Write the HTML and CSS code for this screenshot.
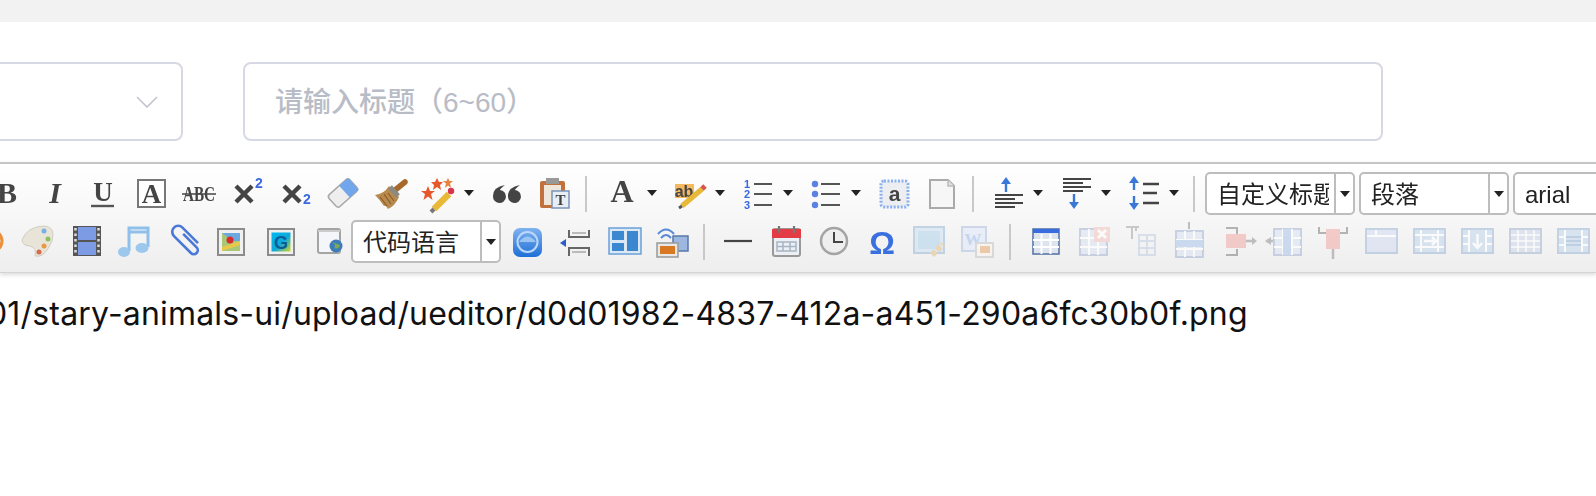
FILE: index.html
```html
<!DOCTYPE html>
<html lang="zh">
<head>
<meta charset="utf-8">
<title>编辑器</title>
<link rel="stylesheet" href="styles.css">
</head>
<body>
<svg class="defs" width="0" height="0" aria-hidden="true">
  <defs>
    <symbol id="grid" viewBox="0 0 48 48">
      <rect x="11" y="12" width="27" height="26" fill="#dde4f2" stroke="#a8bad6" stroke-width="2"/>
      <path d="M11 21H38M11 30H38M20 12V38M29 12V38" stroke="#fff" stroke-width="2"/>
    </symbol>
    <linearGradient id="blueapp" x1="0" y1="0" x2="0" y2="1"><stop offset="0" stop-color="#7fb2f0"/><stop offset="1" stop-color="#1f6fd8"/></linearGradient>
    <linearGradient id="gimg" x1="0" y1="0" x2="1" y2="1"><stop offset="0" stop-color="#00b8f0"/><stop offset=".55" stop-color="#10a8d8"/><stop offset="1" stop-color="#d8d820"/></linearGradient>
  </defs>
</svg>
<div class="topbar"></div>
<div class="form">
  <div class="select"><svg class="chev" viewBox="0 0 22 12"><path d="M1 1L11 11L21 1" fill="none" stroke="#c0c4cc" stroke-width="1.6"/></svg></div>
  <div class="input">请输入标题（6~60）</div>
</div>
<div class="editor">
  <div class="toolbar">
    <div class="row row1">
      <svg class="b" viewBox="0 0 48 48"><text x="24" y="34" class="t-sb" font-size="30" text-anchor="middle">B</text></svg>
      <svg class="b" viewBox="0 0 48 48"><text x="24" y="34" class="t-si" font-size="30" text-anchor="middle">I</text></svg>
      <svg class="b" viewBox="0 0 48 48"><text x="24" y="32" class="t-sb" font-size="27" text-anchor="middle">U</text><path d="M12 37H35" stroke="#555" stroke-width="2.4"/></svg>
      <svg class="b" viewBox="0 0 48 48"><rect x="11" y="11" width="27" height="27" fill="#fff" stroke="#777" stroke-width="2"/><text x="24.5" y="34" class="t-sb" font-size="27" text-anchor="middle">A</text></svg>
      <svg class="b" viewBox="0 0 48 48"><text x="8" y="32" class="t-sb" font-size="20" textLength="32" lengthAdjust="spacingAndGlyphs">ABC</text><path d="M7 25H41" stroke="#444" stroke-width="1.6"/></svg>
      <svg class="b" viewBox="0 0 48 48"><path d="M13 17L29 33M29 17L13 33" stroke="#444" stroke-width="4.4"/><text x="36" y="19" class="t-blue" font-size="14" text-anchor="middle">2</text></svg>
      <svg class="b" viewBox="0 0 48 48"><path d="M13 17L29 33M29 17L13 33" stroke="#444" stroke-width="4.4"/><text x="36" y="35" class="t-blue" font-size="14" text-anchor="middle">2</text></svg>
      <svg class="b" viewBox="0 0 48 48"><g transform="rotate(-42 24 24)"><rect x="10" y="16" width="28" height="16" rx="3" fill="#eee" stroke="#a8a8a8" stroke-width="1.500"/><path d="M26 16H35a3 3 0 0 1 3 3V32H26z" fill="#72a6ec"/></g></svg>
      <svg class="b" viewBox="0 0 48 48"><path d="M27 22L38 13" stroke="#a8682c" stroke-width="5.500" stroke-linecap="round"/><path d="M8 26Q17 25 22 17L32 28Q28 37 21 40Q19 36 17 37Q13 31 8 26z" fill="#b98a4e"/><path d="M23 18L31 27" stroke="#8a8a80" stroke-width="5"/><path d="M13 28L20 37M17 25L24 35M21 24L27 32" stroke="#8a5c28" stroke-width="1.200"/></svg>
      <svg class="b" viewBox="0 0 48 48"><path d="M0-7L2-2 7-2 3 1 4.500 7 0 3.500-4.500 7-3 1-7-2-2-2z" fill="#e8562c" transform="translate(13 24)"/><path d="M0-6L2-2 6-2 3 1 4 6 0 3-4 6-3 1-6-2-2-2z" fill="#e8562c" transform="translate(22 15)"/><path d="M0-5L1.500-2 5-2 2 .500 3 5 0 2.500-3 5-2 .500-5-2-1.500-2z" fill="#e8823c" transform="translate(33 14)"/><path d="M19 40L34 25" stroke="#e8b838" stroke-width="6.500"/><path d="M19 40L16 43" stroke="#777" stroke-width="4"/><circle cx="36" cy="22" r="3.200" fill="#d8344c"/></svg>
      <span class="arr"></span>
      <svg class="b" viewBox="0 0 48 48"><path d="M10 27Q10 18 22 16Q17 20 17 21A6.500 6.500 0 1 1 10 27z" fill="#444"/><path d="M25 27Q25 18 37 16Q32 20 32 21A6.500 6.500 0 1 1 25 27z" fill="#444"/></svg>
      <svg class="b" viewBox="0 0 48 48"><rect x="9" y="12" width="25" height="27" rx="2" fill="#c2703c"/><rect x="15" y="9" width="13" height="6" fill="#999"/><rect x="13" y="16" width="17" height="20" fill="#efe6dc"/><rect x="21" y="22" width="17" height="17" fill="#e8eef6" stroke="#7a94b8" stroke-width="1.500"/><text x="29.500" y="36" class="t-sb" font-size="15" text-anchor="middle">T</text></svg>
      <span class="sep"></span>
      <svg class="b" viewBox="0 0 48 48"><text x="24" y="33" class="t-sb" font-size="32" text-anchor="middle">A</text></svg>
      <span class="arr"></span>
      <svg class="b" viewBox="0 0 48 48"><rect x="9" y="15" width="19" height="14" fill="#f4b860"/><text x="18" y="28" class="t-ss" font-size="16" text-anchor="middle">ab</text><path d="M16 37L36 20" stroke="#e8b838" stroke-width="5.500"/><path d="M36 20L39 17" stroke="#d8544c" stroke-width="5"/><path d="M16 37L13 39" stroke="#555" stroke-width="3"/></svg>
      <span class="arr"></span>
      <svg class="b" viewBox="0 0 48 48"><text x="13" y="19" class="t-blue" font-size="11" text-anchor="middle">1</text><text x="13" y="29" class="t-blue" font-size="11" text-anchor="middle">2</text><text x="13" y="40" class="t-blue" font-size="11" text-anchor="middle">3</text><path d="M20 15H38M20 25H38M20 36H38" stroke="#555" stroke-width="2"/></svg>
      <span class="arr"></span>
      <svg class="b" viewBox="0 0 48 48"><circle cx="13" cy="15" r="3.200" fill="#5a82e0"/><circle cx="13" cy="25" r="3.200" fill="#5a82e0"/><circle cx="13" cy="36" r="3.200" fill="#5a82e0"/><path d="M19 15H38M19 25H38M19 36H38" stroke="#555" stroke-width="2"/></svg>
      <span class="arr"></span>
      <svg class="b" viewBox="0 0 48 48"><rect x="11" y="12" width="27" height="26" rx="3" fill="#eceef2" stroke="#8ab0f0" stroke-width="3" stroke-dasharray="2 1.500"/><text x="24.500" y="32" class="t-ss" font-size="21" text-anchor="middle">a</text></svg>
      <svg class="b" viewBox="0 0 48 48"><path d="M12 11H30L36 17V39H12z" fill="#f6f6f6" stroke="#aaa" stroke-width="2"/><path d="M30 11V17H36" fill="#e0e0e0" stroke="#bbb" stroke-width="1.500"/></svg>
      <span class="sep tight"></span>
      <svg class="b" viewBox="0 0 48 48"><path d="M22 13V23" stroke="#3a78d8" stroke-width="2.400"/><path d="M22 8L27 15H17z" fill="#3a78d8"/><path d="M11 26H39M11 30H31M11 34H39M11 38H31" stroke="#444" stroke-width="2.200"/></svg>
      <span class="arr"></span>
      <svg class="b" viewBox="0 0 48 48"><path d="M11 10H39M11 14H31M11 18H39M11 22H31" stroke="#444" stroke-width="2.200"/><path d="M22 25V34" stroke="#3a78d8" stroke-width="2.400"/><path d="M22 40L27 33H17z" fill="#3a78d8"/></svg>
      <span class="arr"></span>
      <svg class="b" viewBox="0 0 48 48"><path d="M14 12V21M14 27V36" stroke="#3a78d8" stroke-width="2.400"/><path d="M14 7L19 14H9zM14 41L19 34H9z" fill="#3a78d8"/><path d="M23 15H39M23 24H37M23 34H39" stroke="#444" stroke-width="2.400"/></svg>
      <span class="arr"></span>
      <span class="sep narrow"></span>
      <div class="combo"><span class="combo-text">自定义标题</span><span class="combo-arr"></span></div>
      <div class="combo"><span class="combo-text">段落</span><span class="combo-arr"></span></div>
      <div class="combo"><span class="combo-text">arial</span><span class="combo-arr"></span></div>
    </div>
    <div class="row row2">
      <svg class="b" viewBox="0 0 48 48"><circle cx="24" cy="24" r="11" fill="#eee" stroke="#e8903c" stroke-width="3"/></svg>
      <svg class="b" viewBox="0 0 48 48"><path d="M7 23Q12 10 28 9Q38 9 38 18Q38 24 34 30Q28 41 20 39Q22 31 15 29Q8 29 7 23z" fill="#e8e4d8" stroke="#d0ccc0"/><circle cx="29" cy="14" r="2.500" fill="#7ab0e8"/><circle cx="33" cy="22" r="2.500" fill="#8cc060"/><circle cx="29" cy="29" r="2.500" fill="#e89848"/><circle cx="24" cy="35" r="2.500" fill="#d86850"/></svg>
      <svg class="b" viewBox="0 0 48 48"><rect x="10" y="9" width="28" height="30" fill="#555"/><rect x="15" y="10" width="18" height="13" fill="#7d9ae4"/><rect x="15" y="25" width="18" height="13" fill="#7d9ae4"/><path d="M12.500 11V38M35.500 11V38" stroke="#ddd" stroke-width="2.500" stroke-dasharray="2.500 3"/></svg>
      <svg class="b" viewBox="0 0 48 48"><path d="M18 34V11H37V30" fill="none" stroke="#8fc0ea" stroke-width="3"/><path d="M18 15H37" stroke="#8fc0ea" stroke-width="3"/><ellipse cx="13" cy="35" rx="6" ry="5" fill="#9cc8ee"/><ellipse cx="31" cy="31" rx="6.500" ry="5" fill="#9cc8ee"/></svg>
      <svg class="b" viewBox="0 0 48 48"><path d="M30 17V36a4 4 0 0 1-8 0V12a6 6 0 0 1 12 0V34" fill="none" stroke="#4a78d8" stroke-width="2.600" transform="rotate(-45 27 24)"/></svg>
      <svg class="b" viewBox="0 0 48 48"><rect x="11" y="12" width="26" height="26" fill="#f0f0f0" stroke="#8c8c8c" stroke-width="2"/><rect x="15" y="16" width="18" height="18" fill="#a8c878"/><path d="M15 16H33V24H26z" fill="#6aa8e0"/><path d="M15 30L33 24V28L15 34z" fill="#e8c848"/><circle cx="23" cy="23" r="3.500" fill="#d82c2c"/></svg>
      <svg class="b" viewBox="0 0 48 48"><rect x="13" y="12" width="26" height="26" fill="#f0f0f0" stroke="#8c8c8c" stroke-width="2"/><rect x="16.500" y="15.500" width="19" height="19" fill="url(#gimg)"/><text x="26" y="32" class="t-g" font-size="18" text-anchor="middle">G</text></svg>
      <svg class="b" viewBox="0 0 48 48"><rect x="15" y="12" width="22" height="24" rx="2" fill="#f4f6fa" stroke="#a4a4a4" stroke-width="2"/><path d="M15 14H37" stroke="#ccc" stroke-width="2"/><circle cx="33" cy="29" r="6.500" fill="#3c7cb8"/><path d="M29 25Q34 28 31 31Q36 33 37 28" fill="#7ca858"/></svg>
      <div class="combo code"><span class="combo-text">代码语言</span><span class="combo-arr"></span></div>
      <svg class="b" viewBox="0 0 48 48"><rect x="10" y="11" width="29" height="29" rx="7" fill="url(#blueapp)"/><circle cx="24.500" cy="25" r="10" fill="none" stroke="#bcd8f8" stroke-width="2"/><path d="M16 25Q24.500 14 33 25" fill="#9cc4f0"/></svg>
      <svg class="b" viewBox="0 0 48 48"><path d="M18 13V20H38V13M18 39V31H38V39" fill="none" stroke="#666" stroke-width="2"/><path d="M21 16H35M21 35H35" stroke="#bbb" stroke-width="2"/><path d="M9 26L15 22V30z" fill="#2c5cc8"/></svg>
      <svg class="b" viewBox="0 0 48 48"><rect x="10" y="11" width="32" height="26" fill="#dce8f4" stroke="#6aa0d8" stroke-width="1.500"/><rect x="13" y="14" width="12" height="9" fill="#3c88d0"/><rect x="13" y="26" width="12" height="8" fill="#3c88d0"/><rect x="28" y="14" width="11" height="20" fill="#3c88d0"/></svg>
      <svg class="b" viewBox="0 0 48 48"><path d="M11 17Q19 8 27 17M14 21Q19 15 24 21" fill="none" stroke="#5a88d8" stroke-width="2"/><rect x="26" y="19" width="15" height="15" fill="#9cb8e0" stroke="#5a78a8" stroke-width="1.500"/><rect x="10" y="26" width="21" height="14" fill="#e8e8e8" stroke="#999" stroke-width="1.500"/><rect x="13" y="29" width="15" height="8" fill="#d87820"/></svg>
      <span class="sep shift"></span>
      <svg class="b" viewBox="0 0 48 48"><path d="M10 24H38" stroke="#444" stroke-width="2.200"/></svg>
      <svg class="b" viewBox="0 0 48 48"><rect x="11" y="12" width="27" height="27" rx="2" fill="#ecf0f4" stroke="#999" stroke-width="2"/><rect x="10" y="12" width="29" height="9" fill="#e43c44"/><path d="M17 9V16M32 9V16" stroke="#777" stroke-width="2.200"/><path d="M15 25H34V34H15zM21 25V34M28 25V34M15 29.500H34" fill="none" stroke="#a8b4c4" stroke-width="1.500"/></svg>
      <svg class="b" viewBox="0 0 48 48"><circle cx="24" cy="24" r="13" fill="#eee" stroke="#a4a4a4" stroke-width="2.500"/><path d="M24 15V25H33" fill="none" stroke="#444" stroke-width="2"/></svg>
      <svg class="b" viewBox="0 0 48 48"><text x="24" y="37" class="t-omega" font-size="32" text-anchor="middle">Ω</text></svg>
      <svg class="b dim" viewBox="0 0 48 48"><rect x="8" y="10" width="30" height="26" fill="#cfe2f4" stroke="#a0bcd8" stroke-width="2"/><rect x="12" y="14" width="22" height="18" fill="#b4d4ec"/><path d="M26 38L37 27" stroke="#e4c48c" stroke-width="6" stroke-dasharray="5 2"/></svg>
      <svg class="b dim" viewBox="0 0 48 48"><rect x="8" y="10" width="24" height="24" fill="#dfe8f8" stroke="#b4c4e0" stroke-width="2"/><text x="19" y="28" class="t-w" font-size="17" text-anchor="middle">W</text><rect x="22" y="26" width="17" height="14" fill="#fbf6ee" stroke="#c8c8c8" stroke-width="2"/><rect x="26" y="29" width="10" height="7" fill="#e8b078"/></svg>
      <span class="sep shift-less"></span>
      <svg class="b" viewBox="0 0 48 48"><rect x="12" y="12" width="26" height="25" fill="#dde4ee" stroke="#5a78a8" stroke-width="1.600"/><path d="M12 14H38" stroke="#3a6ce0" stroke-width="4"/><path d="M12 23H38M12 30H38M20.500 17V37M29.500 17V37" stroke="#fff" stroke-width="2"/></svg>
      <svg class="b dim" viewBox="0 0 48 48"><use href="#grid"/><rect x="25" y="10" width="16" height="15" fill="#f4c8c4"/><path d="M29 13L37 21M37 13L29 21" stroke="#fff" stroke-width="3"/></svg>
      <svg class="b dim" viewBox="0 0 48 48"><path d="M9 10H22M15 10V22M19 10V14" fill="none" stroke="#aaa" stroke-width="2"/><path d="M22 18H38V38H22zM22 24H38M22 31H38M30 18V38" fill="none" stroke="#c4d0e4" stroke-width="2"/></svg>
      <svg class="b dim" viewBox="0 0 48 48"><path d="M24 5V12" stroke="#999" stroke-width="2"/><use href="#grid" y="2"/><rect x="11" y="23" width="27" height="7" fill="#b0c8ec"/></svg>
      <svg class="b dim" viewBox="0 0 48 48"><path d="M13 11H24V17M13 38H24V32" fill="none" stroke="#888" stroke-width="2"/><rect x="13" y="17" width="20" height="14" fill="#f0b0ac"/><path d="M33 24H42" stroke="#999" stroke-width="2.500"/><path d="M44 24L39 20V28z" fill="#999"/></svg>
      <svg class="b dim" viewBox="0 0 48 48"><path d="M5 24H14" stroke="#999" stroke-width="2.500"/><path d="M4 24L10 20V28z" fill="#999"/><use href="#grid" x="2"/><rect x="22" y="12" width="8" height="26" fill="#b0c8ec"/></svg>
      <svg class="b dim" viewBox="0 0 48 48"><path d="M10 10V16H17M38 10V16H31" fill="none" stroke="#888" stroke-width="2"/><rect x="17" y="12" width="14" height="20" fill="#f0b0ac"/><path d="M24 32V42" stroke="#999" stroke-width="2.500"/></svg>
      <svg class="b dim" viewBox="0 0 48 48"><rect x="9" y="12" width="31" height="24" fill="#d4dcf0" stroke="#a4bcd8" stroke-width="2"/><path d="M10 19H39M19 13V19" stroke="#fff" stroke-width="2"/></svg>
      <svg class="b dim" viewBox="0 0 48 48"><rect x="9" y="12" width="31" height="24" fill="#c4d8ec" stroke="#a4bcd8" stroke-width="2"/><path d="M10 18H39M10 30H39M16 13V35M33 13V35" stroke="#fff" stroke-width="2"/><path d="M19 24H30M27 20L31 24L27 28" fill="none" stroke="#fff" stroke-width="2.500"/></svg>
      <svg class="b dim" viewBox="0 0 48 48"><rect x="9" y="12" width="31" height="24" fill="#c4d8ec" stroke="#a4bcd8" stroke-width="2"/><path d="M16 13V35M33 13V35M10 19H16M33 19H39M10 27H16M33 27H39" stroke="#fff" stroke-width="2"/><path d="M24.500 17V30M20 26L24.500 31L29 26" fill="none" stroke="#fff" stroke-width="2.500"/></svg>
      <svg class="b dim" viewBox="0 0 48 48"><rect x="9" y="12" width="31" height="24" fill="#d0d8e8" stroke="#a8b8d0" stroke-width="2"/><path d="M10 18H39M10 24H39M10 30H39M17 13V35M25 13V35M33 13V35" stroke="#fff" stroke-width="1.600"/></svg>
      <svg class="b dim" viewBox="0 0 48 48"><rect x="9" y="12" width="31" height="24" fill="#c4d8ec" stroke="#a4bcd8" stroke-width="2"/><path d="M16 13V35M33 13V35M10 20H16M33 20H39M10 28H16M33 28H39" stroke="#fff" stroke-width="2"/><path d="M17 20H32M17 24H32M17 28H32" stroke="#90acd0" stroke-width="1.600"/></svg>
    </div>
  </div>
  <div class="content"><p class="url">01/stary-animals-ui/upload/ueditor/d0d01982-4837-412a-a451-290a6fc30b0f.png</p></div>
</div>
</body>
</html>
```
FILE: styles.css
```css
* { box-sizing: border-box; }
html, body { margin: 0; height: 496px; overflow: hidden; background: #fff; }
body { font-family: "Liberation Sans", "Noto Sans CJK SC", sans-serif; }
.defs { display: block; height: 0; }
.topbar { height: 22px; background: #f2f2f2; }
.form { display: flex; gap: 60px; padding-top: 40px; margin-left: -300px; }
.select, .input { height: 79px; border: 2px solid #d6d9e4; border-radius: 8px; background: #fff; }
.select { width: 483px; display: flex; align-items: center; justify-content: flex-end; padding-right: 23px; flex: none; }
.chev { width: 22px; height: 12px; display: block; }
.input { width: 1140px; flex: none; padding: 0 30px; line-height: 78px; font-size: 28px; font-weight: 500; color: #b8bcc6; font-family: "Liberation Sans", "Noto Sans CJK SC", sans-serif; }
.editor { margin-top: 21px; }
.toolbar { height: 111px; border-top: 2px solid #c6c6c6; border-bottom: 1px solid #d4d4d4; background: linear-gradient(#fff, #eeeeee); box-shadow: 0 2px 4px rgba(0, 0, 0, .14); padding-top: 5px; overflow: hidden; }
.row { display: flex; align-items: center; height: 48px; white-space: nowrap; filter: blur(.45px); }
.row1 { margin-left: -17px; width: 1700px; }
.row2 { margin-left: -33px; width: 1700px; }
.b { width: 48px; height: 48px; flex: none; display: block; }
.arr { width: 20px; height: 48px; flex: none; position: relative; }
.arr::before, .combo-arr::before { content: ""; position: absolute; left: 50%; top: 50%; width: 0; height: 0; border-left: 5px solid transparent; border-right: 5px solid transparent; border-top: 6px solid #222; }
.arr::before { margin: -3px 0 0 -9px; }
.sep { width: 19px; height: 48px; flex: none; position: relative; }
.sep::before { content: ""; position: absolute; left: 6px; top: 7px; width: 2px; height: 36px; background: #c8c8c8; }
.sep.tight { width: 18px; }
.sep.narrow { width: 17px; }
.sep.narrow::before { left: 5px; }
.sep.shift::before { left: 8px; }
.sep.shift-less::before { left: 7px; }
.combo { width: 150px; height: 43px; flex: none; margin-right: 4px; display: flex; background: #fff; border: 2px solid #bdbdbd; border-radius: 5px; font-size: 24px; line-height: 41px; color: #222; font-family: "Liberation Sans", "Noto Sans CJK SC", sans-serif; }
.combo-text { width: 122px; margin-right: 6px; flex: none; padding-left: 10px; overflow: hidden; }
.combo-arr { flex: 1; position: relative; border-left: 2px solid #bdbdbd; margin-left: -1px; }
.combo-arr::before { margin: -2px 0 0 -5px; }
.combo.code { margin: 0 2px 0 0; }
.content { padding-top: 19px; }
.url { margin: 0 0 0 -13px; font-size: 32px; line-height: 44px; letter-spacing: .18px; color: #111; white-space: nowrap; font-family: Inter, "Liberation Sans", sans-serif; }
.dim { opacity: .6; }
.t-sb { font-family: "Liberation Serif", serif; font-weight: 700; fill: #444; }
.t-si { font-family: "Liberation Serif", serif; font-weight: 700; font-style: italic; fill: #444; }
.t-ss { font-family: "Liberation Sans", sans-serif; font-weight: 700; fill: #444; }
.t-blue { font-family: "Liberation Sans", sans-serif; font-weight: 700; fill: #3a68e0; }
.t-g { font-family: "Liberation Sans", sans-serif; font-weight: 700; fill: #0c5c98; }
.t-w { font-family: "Liberation Serif", serif; font-weight: 700; fill: #a4c0e8; }
.t-omega { font-family: "Liberation Sans", sans-serif; font-weight: 700; fill: #3a6fe0; }
```
